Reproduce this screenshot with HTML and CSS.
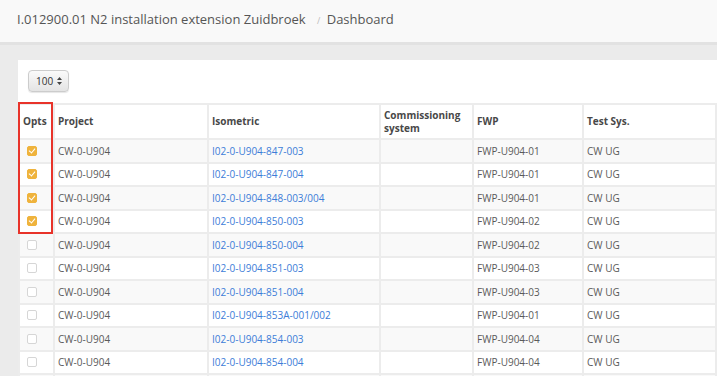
FILE: index.html
```html
<!DOCTYPE html>
<html lang="en">
  <head>
    <meta charset="UTF-8" />
    <meta name="viewport" content="width=device-width, initial-scale=1.0" />
    <title>Dashboard</title>
    <link rel="stylesheet" href="styles.css">
  </head>
  <body>
    <div class="topbar">
      <span class="crumb">I.012900.01 N2 installation extension Zuidbroek</span>
      <span class="sep">/</span>
      <span class="crumb">Dashboard</span>
    </div>

    <div class="main">
      <div class="panel">
        <div class="toolbar">
          <div class="pagesize">
            <span>100</span>
            <svg width="5" height="8" viewBox="0 0 5 8"><path d="M2.5 0 L5 3 H0 Z M2.5 8 L5 5 H0 Z" fill="#444"/></svg>
          </div>
        </div>

        <div class="table-wrap">
          <div class="highlight"></div>
          <table class="grid">
            <colgroup>
              <col style="width: 35px" />
              <col style="width: 154px" />
              <col style="width: 172px" />
              <col style="width: 93px" />
              <col style="width: 110px" />
              <col style="width: 133px" />
            </colgroup>
            <thead>
              <tr>
                <th>Opts</th>
                <th>Project</th>
                <th>Isometric</th>
                <th>Commissioning system</th>
                <th>FWP</th>
                <th>Test Sys.</th>
              </tr>
            </thead>
            <tbody>
              <tr>
                <td class="opt"><span class="check on"></span></td>
                <td>CW-0-U904</td>
                <td><a href="#">I02-0-U904-847-003</a></td>
                <td></td>
                <td>FWP-U904-01</td>
                <td>CW UG</td>
              </tr>
              <tr>
                <td class="opt"><span class="check on"></span></td>
                <td>CW-0-U904</td>
                <td><a href="#">I02-0-U904-847-004</a></td>
                <td></td>
                <td>FWP-U904-01</td>
                <td>CW UG</td>
              </tr>
              <tr>
                <td class="opt"><span class="check on"></span></td>
                <td>CW-0-U904</td>
                <td><a href="#">I02-0-U904-848-003/004</a></td>
                <td></td>
                <td>FWP-U904-01</td>
                <td>CW UG</td>
              </tr>
              <tr>
                <td class="opt"><span class="check on"></span></td>
                <td>CW-0-U904</td>
                <td><a href="#">I02-0-U904-850-003</a></td>
                <td></td>
                <td>FWP-U904-02</td>
                <td>CW UG</td>
              </tr>
              <tr>
                <td class="opt"><span class="check"></span></td>
                <td>CW-0-U904</td>
                <td><a href="#">I02-0-U904-850-004</a></td>
                <td></td>
                <td>FWP-U904-02</td>
                <td>CW UG</td>
              </tr>
              <tr>
                <td class="opt"><span class="check"></span></td>
                <td>CW-0-U904</td>
                <td><a href="#">I02-0-U904-851-003</a></td>
                <td></td>
                <td>FWP-U904-03</td>
                <td>CW UG</td>
              </tr>
              <tr>
                <td class="opt"><span class="check"></span></td>
                <td>CW-0-U904</td>
                <td><a href="#">I02-0-U904-851-004</a></td>
                <td></td>
                <td>FWP-U904-03</td>
                <td>CW UG</td>
              </tr>
              <tr>
                <td class="opt"><span class="check"></span></td>
                <td>CW-0-U904</td>
                <td><a href="#">I02-0-U904-853A-001/002</a></td>
                <td></td>
                <td>FWP-U904-01</td>
                <td>CW UG</td>
              </tr>
              <tr>
                <td class="opt"><span class="check"></span></td>
                <td>CW-0-U904</td>
                <td><a href="#">I02-0-U904-854-003</a></td>
                <td></td>
                <td>FWP-U904-04</td>
                <td>CW UG</td>
              </tr>
              <tr>
                <td class="opt"><span class="check"></span></td>
                <td>CW-0-U904</td>
                <td><a href="#">I02-0-U904-854-004</a></td>
                <td></td>
                <td>FWP-U904-04</td>
                <td>CW UG</td>
              </tr>
              <tr class="last">
                <td class="opt"></td>
                <td></td>
                <td></td>
                <td></td>
                <td></td>
                <td></td>
              </tr>
            </tbody>
          </table>
        </div>
      </div>
    </div>
  </body>
</html>
```

FILE: styles.css
```css
html,
body {
  margin: 0;
  height: 100%;
  overflow: hidden;
}
body {
  font-family: "Open Sans", sans-serif;
  background-color: #ebebeb;
  color: #5a5a5a;
}
.topbar {
  height: 45px;
  box-sizing: border-box;
  padding: 10px 0 0 17px;
  background-color: #f9f9f9;
  border-bottom: 3px solid #e2e2e2;
  font-size: 13px;
  line-height: 18px;
  color: #555;
}
.sep {
  color: #bbb;
  font-size: 9px;
  margin: 0 3px 0 8px;
}
.main {
  padding: 15px 0 0 18px;
}
.panel {
  background: white;
  padding-top: 10px;
}
.toolbar {
  padding-left: 10px;
  height: 33px;
}
.pagesize {
  width: 41px;
  height: 22px;
  box-sizing: border-box;
  display: flex;
  align-items: center;
  justify-content: space-between;
  padding: 0 6px 0 7px;
  border: 1px solid #ccc;
  border-radius: 4px;
  background: linear-gradient(#fafafa, #e4e4e4);
  box-shadow: 0 1px 1px rgba(0, 0, 0, 0.1);
  font-size: 10px;
  color: #333;
}
.table-wrap {
  position: relative;
}
.highlight {
  position: absolute;
  left: 0;
  top: -1px;
  width: 35px;
  height: 132px;
  box-sizing: border-box;
  border: 2px solid #e8332a;
  z-index: 2;
}
.grid {
  border-collapse: collapse;
  table-layout: fixed;
  width: 697px;
  font-size: 10px;
}
.grid th,
.grid td {
  border: 2px solid #ececec;
  padding: 0 3px;
  text-align: left;
  vertical-align: middle;
  white-space: nowrap;
}
.grid th {
  height: 33px;
  color: #484848;
  font-weight: bold;
  line-height: 13px;
  white-space: normal;
}
.grid td {
  height: 21.5px;
  line-height: 14px;
}
.grid tbody tr:nth-child(odd) td {
  background-color: #f9f9f9;
}
.grid a {
  color: #3d7dd8;
  text-decoration: none;
}
.grid td.opt {
  padding-left: 7px;
}
.check {
  display: block;
  width: 10px;
  height: 10px;
  box-sizing: border-box;
  border: 1px solid #d6d6d6;
  border-radius: 2px;
  background: white;
  position: relative;
}
.check.on {
  border-color: #efb33c;
  background-color: #efb33c;
}
.check.on::after {
  content: "";
  position: absolute;
  left: 2px;
  top: 0px;
  width: 3px;
  height: 5px;
  border-right: 1.5px solid white;
  border-bottom: 1.5px solid white;
  transform: rotate(40deg);
}
```
